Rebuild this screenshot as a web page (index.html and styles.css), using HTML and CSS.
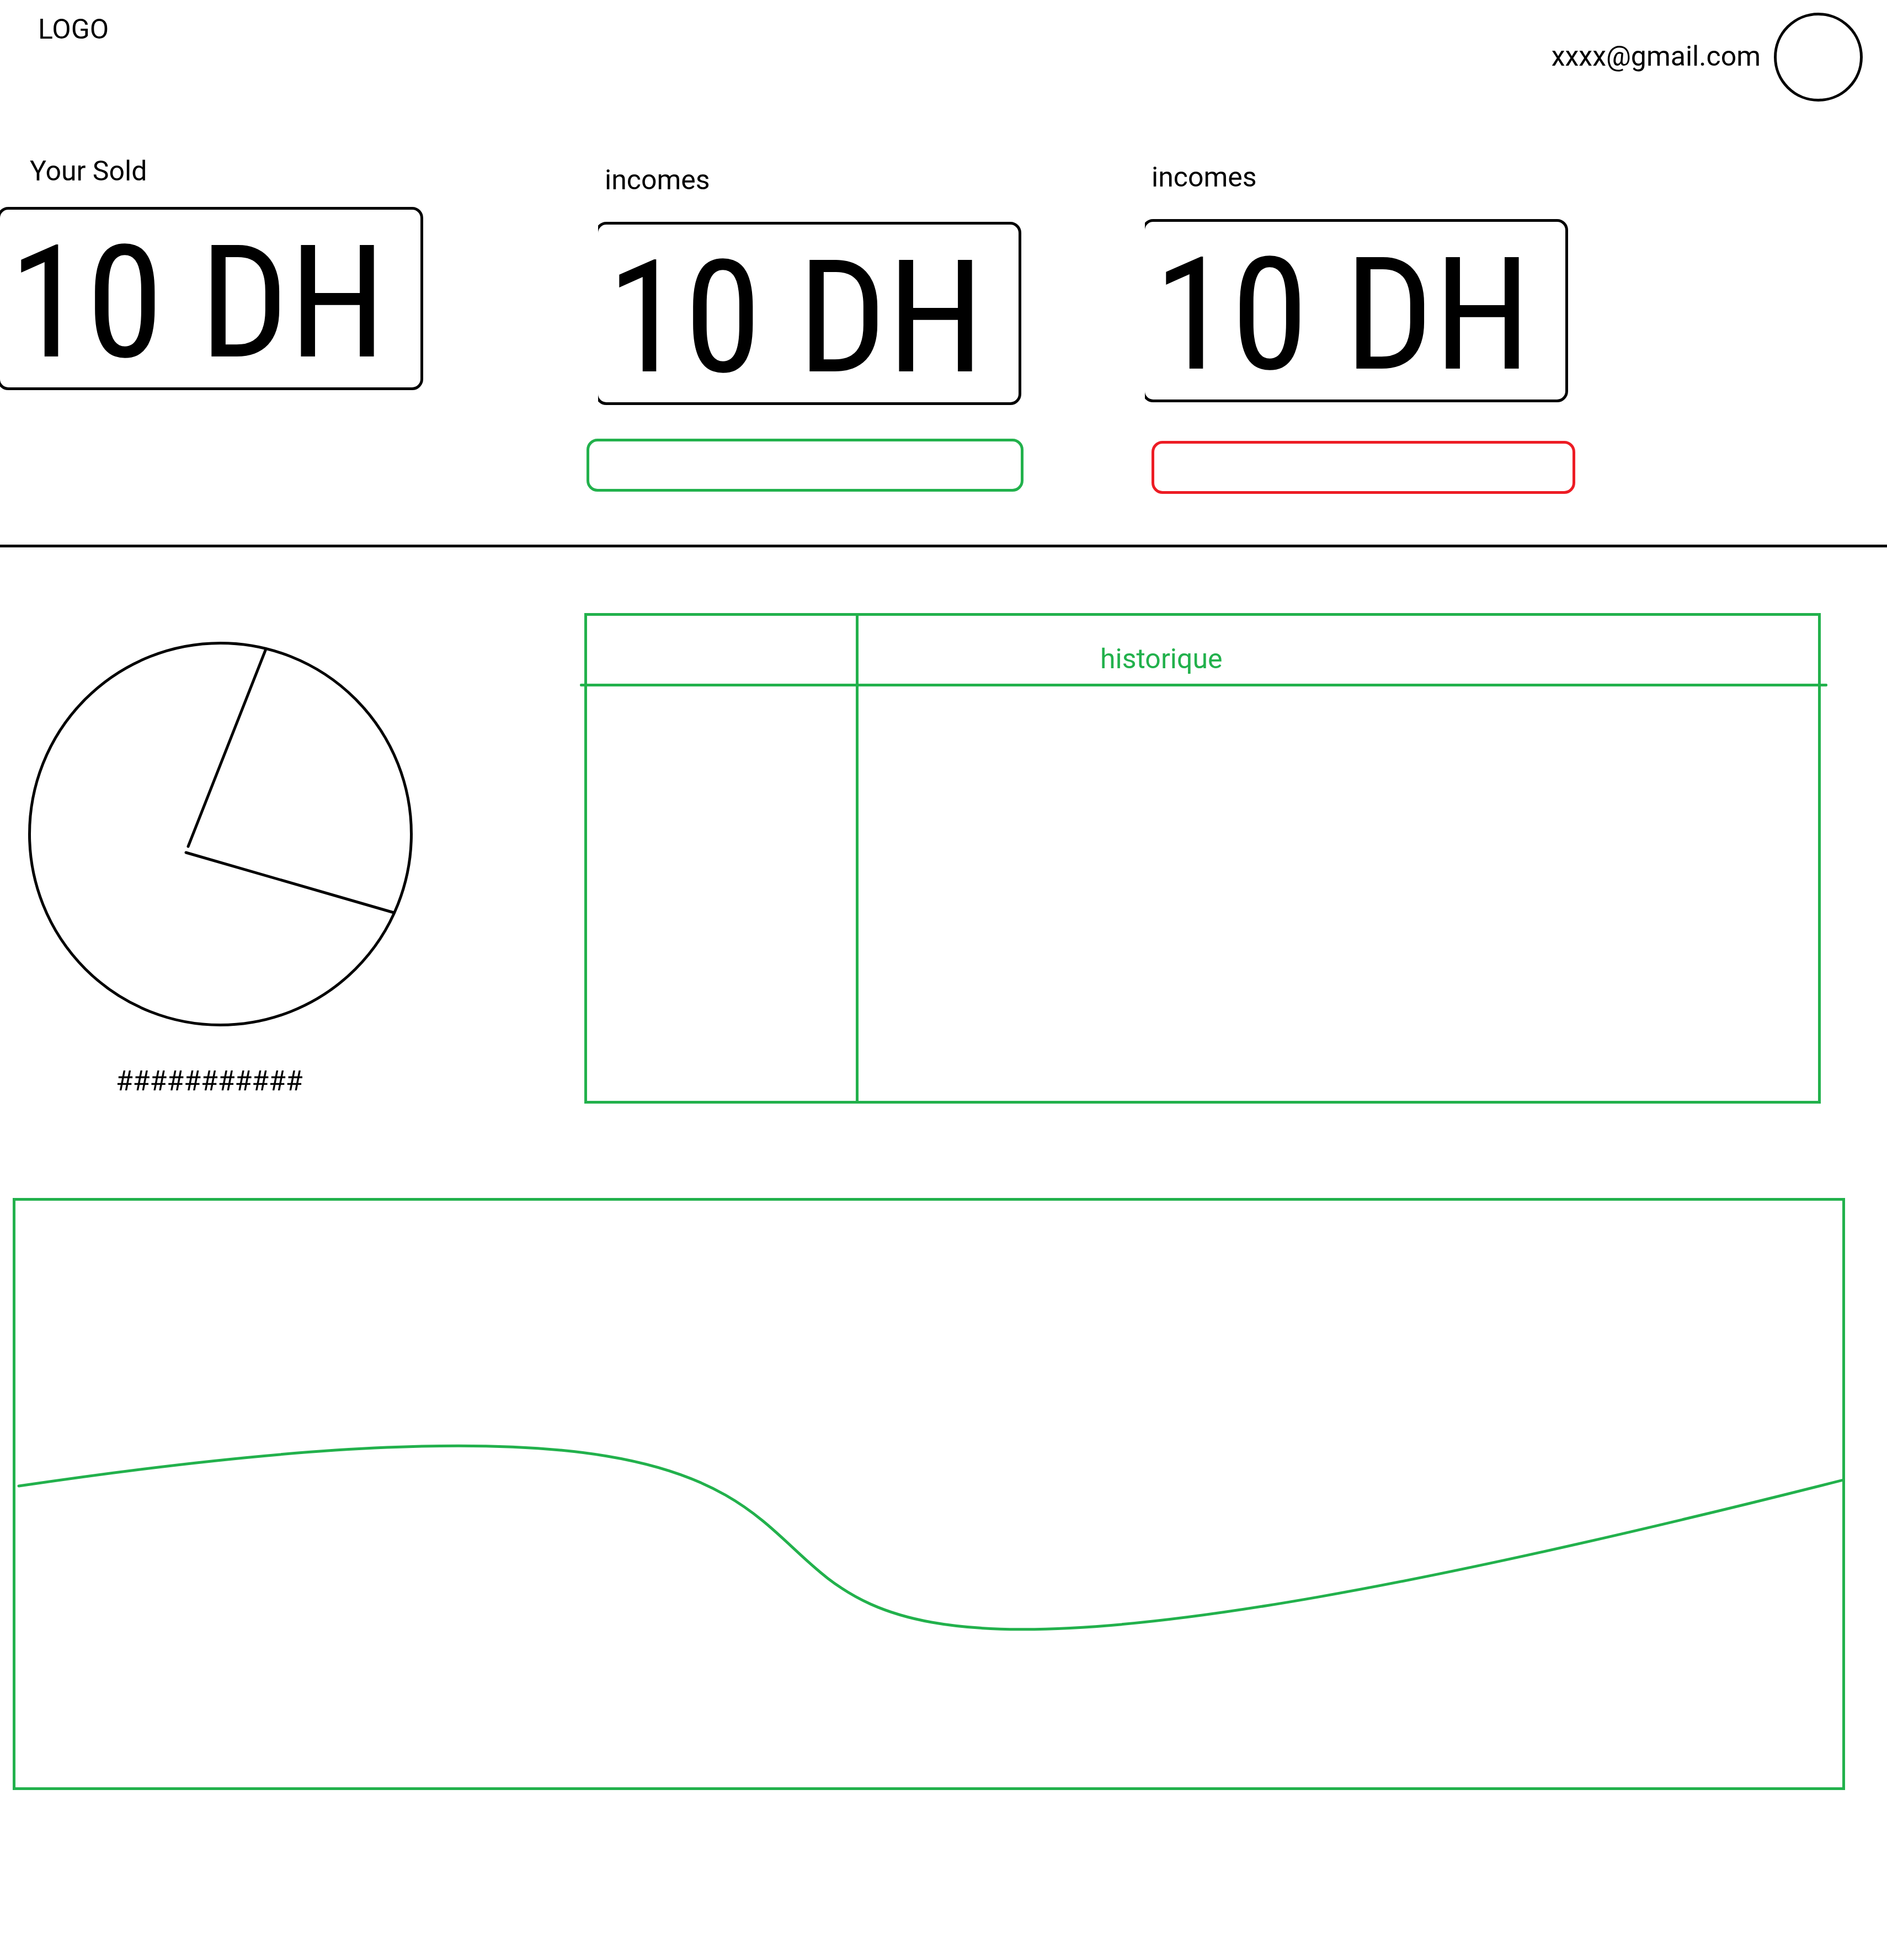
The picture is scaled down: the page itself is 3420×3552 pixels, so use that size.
FILE: index.html
```html
<!DOCTYPE html>
<html lang="en">
<head>
<meta charset="utf-8">
<title>Dashboard</title>
<meta name="viewport" content="width=device-width, initial-scale=1">
<link rel="stylesheet" href="styles.css">
</head>
<body>
<header class="topbar">
  <div class="logo">LOGO</div>
  <div class="account">
    <span class="email">xxxx@gmail.com</span>
    <span class="avatar"></span>
  </div>
</header>
<main>
  <section class="summary">
    <article class="metric metric-sold">
      <h2 class="metric-label">Your Sold</h2>
      <p class="card">10 DH</p>
    </article>
    <article class="metric metric-in">
      <h2 class="metric-label">incomes</h2>
      <p class="card">10 DH</p>
      <div class="pill pill-green"></div>
    </article>
    <article class="metric metric-out">
      <h2 class="metric-label">incomes</h2>
      <p class="card">10 DH</p>
      <div class="pill pill-red"></div>
    </article>
  </section>
  <section class="details">
    <figure class="pie">
      <svg class="pie-chart" viewBox="0 0 697 697" aria-hidden="true">
        <circle cx="348.5" cy="348.5" r="346"/>
        <path d="M431 13 290 371M286 382 663 491"/>
      </svg>
      <figcaption class="pie-caption">###########</figcaption>
    </figure>
    <div class="history">
      <table class="history-table">
        <thead><tr><th class="history-date"></th><th class="history-title">historique</th></tr></thead>
        <tbody><tr><td class="history-date"></td><td></td></tr></tbody>
      </table>
    </div>
  </section>
  <section class="trend">
    <svg class="trend-chart" viewBox="0 0 3311 1063" preserveAspectRatio="none" aria-hidden="true">
      <path d="M6 517C2407 162 338 1260 3313 506"/>
    </svg>
  </section>
</main>
</body>
</html>
```
FILE: styles.css
```css
:root {
  --green: #22b14c;
  --red: #ed1c24;
  --line: 5px;
}

* {
  box-sizing: border-box;
}

body {
  margin: 0;
  background: #fff;
  color: #000;
  font: 400 50px/60px Roboto, "Liberation Sans", sans-serif;
}

.topbar {
  display: flex;
  justify-content: space-between;
  align-items: flex-start;
  padding: 23px 44px 0 69px;
}

.account {
  display: flex;
  align-items: center;
  gap: 24px;
}

.email {
  padding-bottom: 4px;
}

.avatar {
  width: 161px;
  height: 161px;
  border: var(--line) solid #000;
  border-radius: 50%;
}

.summary {
  display: grid;
  grid-template-columns: 1063fr 1012fr 1345fr;
  align-items: start;
  padding: 96px 0 92px;
  border-bottom: var(--line) solid #000;
}

.metric-label {
  margin: 0;
  font-size: 50px;
  font-weight: 400;
}

.card {
  position: relative;
  width: 767px;
  margin: 0;
  padding: 0 0 0 16px;
  font-family: "Roboto Condensed", "Liberation Sans Narrow", sans-serif;
  font-size: 284px;
  line-height: 332px;
  padding-top: 8px;
  height: 332px;
  white-space: nowrap;
}

/* frame whose left stroke is trimmed away */
.card::before {
  content: "";
  position: absolute;
  inset: 0 0 0 -5px;
  border: var(--line) solid #000;
  border-radius: 20px;
  clip-path: inset(0 0 0 5px);
}

.metric-sold .metric-label {
  padding: 0 0 35px 54px;
}

.metric-in {
  padding-top: 16px;
}

.metric-in .metric-label {
  padding: 0 0 46px 33px;
}

.metric-in .card {
  margin-left: 21px;
}

.metric-out {
  padding-top: 11px;
}

.metric-out .metric-label {
  padding: 0 0 46px 12px;
}

.pill {
  height: 96px;
  border: var(--line) solid;
  border-radius: 20px;
}

.pill-green {
  width: 792px;
  margin-top: 61px;
  border-color: var(--green);
}

.pill-red {
  width: 768px;
  margin: 70px 0 0 12px;
  border-color: var(--red);
}

.details {
  display: grid;
  grid-template-columns: 1059fr 2361fr;
  align-items: start;
  padding-top: 119px;
}

.pie {
  margin: 0;
  padding: 52px 0 0 51px;
}

.pie-chart {
  display: block;
  width: 697px;
  fill: none;
  stroke: #000;
  stroke-width: 5;
  stroke-linecap: round;
}

.pie-caption {
  padding: 69px 0 0 159px;
}

.history {
  position: relative;
  margin-right: 120px;
}

/* header rule runs slightly past both sides of the frame */
.history::after {
  content: "";
  position: absolute;
  top: 128px;
  left: -8px;
  right: -12px;
  height: var(--line);
  border-radius: 2px;
  background: var(--green);
}

.history-table {
  width: 100%;
  height: 889px;
  border: var(--line) solid var(--green);
  border-spacing: 0;
  table-layout: fixed;
  color: var(--green);
}

.history-table th,
.history-table td {
  padding: 0;
}

.history-table .history-date {
  width: 492px;
  border-right: var(--line) solid var(--green);
}

.history-table .history-title {
  height: 128px;
  padding: 0 0 20px 438px;
  font-weight: 400;
  text-align: left;
  vertical-align: bottom;
}

.trend {
  margin: 171px 76px 0 23px;
  border: var(--line) solid var(--green);
}

.trend-chart {
  display: block;
  width: 100%;
  height: 1063px;
  fill: none;
  stroke: var(--green);
  stroke-width: 5;
  stroke-linecap: round;
}
```
